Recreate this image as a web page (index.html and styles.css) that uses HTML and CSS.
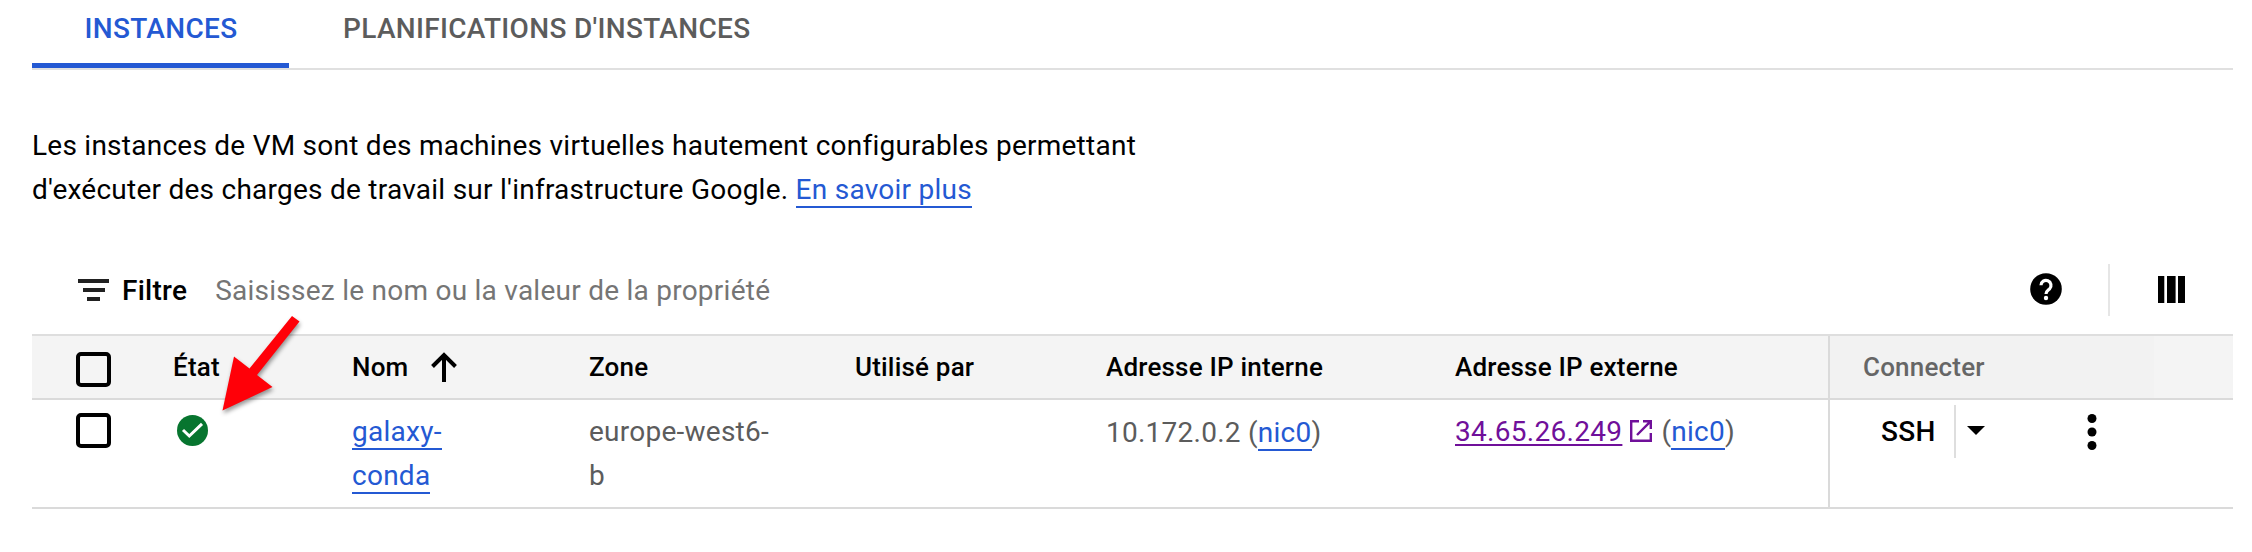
FILE: index.html
```html
<!DOCTYPE html>
<html lang="fr">
<head>
<meta charset="utf-8">
<title>Instances de VM</title>
<link rel="stylesheet" href="styles.css">
</head>
<body>
<main class="page">
  <nav class="tabs">
    <a class="tab tab-active">INSTANCES</a>
    <a class="tab">PLANIFICATIONS D'INSTANCES</a>
  </nav>
  <p class="intro">Les instances de VM sont des machines virtuelles hautement configurables permettant<br>d'exécuter des charges de travail sur l'infrastructure Google. <a class="link">En savoir plus</a></p>
  <div class="toolbar">
    <svg class="icon-filter" viewBox="0 0 31 22"><path d="M0 0h31v4H0zM5 9h22v4H5zM9 18h13v4H9z"/></svg>
    <span class="filter-label">Filtre</span>
    <span class="filter-hint">Saisissez le nom ou la valeur de la propriété</span>
    <svg class="icon-help" viewBox="0 0 32 32"><circle cx="16" cy="16" r="15.8"/><path class="q" d="M11 12.300a5 5 0 1 1 8.600 3.500C17.800 17.500 16 18.300 16 21"/><circle class="q-dot" cx="16" cy="25" r="2.200"/></svg>
    <span class="toolbar-rule"></span>
    <svg class="icon-columns" viewBox="0 0 27 27"><path d="M0 0h6.3v27H0zM9 0h8.6v27H9zM20 0h7v27h-7z"/></svg>
  </div>
  <div class="table">
    <div class="row head">
      <div class="cell"><span class="checkbox"></span></div>
      <div class="cell">État</div>
      <div class="cell">Nom<svg class="icon-sort" viewBox="0 0 26 30"><path d="M13 30V3M1.5 14.5 13 3l11.500 11.500"/></svg></div>
      <div class="cell">Zone</div>
      <div class="cell">Utilisé par</div>
      <div class="cell">Adresse IP interne</div>
      <div class="cell">Adresse IP externe</div>
      <div class="cell connect">Connecter</div>
    </div>
    <div class="row body">
      <div class="cell"><span class="checkbox"></span></div>
      <div class="cell"><svg class="icon-ok" viewBox="0 0 31 31"><circle cx="15.500" cy="15.500" r="15.500"/><path d="M6 15l6.300 6L25 8.800"/></svg></div>
      <div class="cell"><span><a class="link">galaxy-</a><br><a class="link">conda</a></span></div>
      <div class="cell">europe-west6-<br>b</div>
      <div class="cell"></div>
      <div class="cell ip-int"><span>10.172.0.2 (<a class="link">nic0</a>)</span></div>
      <div class="cell"><a class="visited">34.65.26.249</a><svg class="icon-open" viewBox="0 0 22 22"><path d="M9 1.200H1.200v19.600h19.600V13M13 1.200h7.800V9M20.800 1.200 7 15"/></svg><span>(<a class="link">nic0</a>)</span></div>
      <div class="cell connect"><span class="ssh">SSH</span><span class="ssh-rule"></span><svg class="icon-caret" viewBox="0 0 18 9"><path d="M0 0h18L9 9z"/></svg><svg class="icon-more" viewBox="0 0 10 36"><circle cx="5" cy="4.500" r="4.500"/><circle cx="5" cy="18" r="4.500"/><circle cx="5" cy="31.500" r="4.500"/></svg></div>
    </div>
  </div>
  <svg class="pointer" viewBox="0 0 90 105"><path d="M2.500 95.500 14 41.500l15.500 12L72 1l7.500 5.500L37 60l15.500 12z"/></svg>
</main>
</body>
</html>
```
FILE: styles.css
```css
* { box-sizing: border-box; }
body {
  margin: 0;
  background: #fff;
  color: #000;
  font: 400 28px/44px Roboto, sans-serif;
  letter-spacing: .25px;
}
svg { display: block; flex: none; }
.page { position: relative; width: 2252px; height: 552px; padding: 0 19px 0 32px; overflow: hidden; }
.tabs { display: flex; height: 70px; border-bottom: 2px solid #e0e0e0; }
.tab { height: 68px; padding: 7px 54px 0; font-weight: 500; color: #5c5c5c; white-space: nowrap; letter-spacing: .32px; }
.tab-active { width: 257px; padding: 7px 0 0 1px; text-align: center; color: #2459d3; border-bottom: 5px solid #2459d3; }
.intro { margin: 54px 0 0; white-space: nowrap; }
.link { color: #2459d3; border-bottom: 2px solid #2459d3; }
.visited { color: #70109a; letter-spacing: .3px; text-decoration: underline; text-decoration-thickness: 2px; text-underline-offset: 3px; }
.toolbar { display: flex; align-items: center; height: 88px; margin-top: 34px; padding: 0 48px 0 46px; white-space: nowrap; }
.icon-filter { width: 31px; height: 22px; fill: #212121; }
.filter-label { margin: 2px 0 0 13px; font-weight: 500; }
.filter-hint { margin: 2px 0 0 28px; color: #757575; }
.icon-help { width: 32px; height: 32px; margin: -2px 0 0 auto; }
.q { fill: none; stroke: #fff; stroke-width: 3.2; }
.q-dot { fill: #fff; }
.toolbar-rule { width: 2px; height: 52px; margin: 0 48px 0 46px; background: #e6e6e6; }
.icon-columns { width: 27px; height: 27px; margin-top: -1px; }
.table { border-top: 2px solid #dedede; }
.row { display: grid; grid-template-columns: 141px 179px 237px 266px 251px 349px 373px 405px; border-bottom: 2px solid #dadada; }
.cell { display: flex; white-space: nowrap; }
.head { height: 64px; background: #f4f4f4; font-size: 26px; font-weight: 500; letter-spacing: .19px; }
.head .cell { align-items: center; }
.checkbox { width: 35px; height: 35px; margin: 3px 0 0 44px; border: 4px solid #000; border-radius: 5px; background: #fff; }
.head .checkbox { margin-top: 4px; background: transparent; }
.cell.connect { border-left: 2px solid #dadada; }
.head .connect { padding-left: 33px; color: #666; background: linear-gradient(#f2f2f2, #f2f2f2) no-repeat 0 0 / 324px 100%; }
.icon-sort { width: 26px; height: 30px; margin-left: 23px; fill: none; stroke: #000; stroke-width: 4; }
.body { height: 109px; color: #5c5c5c; }
.body .cell { padding-top: 10px; }
.body .ip-int { padding-top: 11px; }
.icon-ok { width: 31px; height: 31px; margin: 5px 0 0 4px; fill: #07752f; }
.icon-ok path { fill: none; stroke: #fff; stroke-width: 3; }
.icon-open { width: 22px; height: 22px; margin: 10px 9px 0 8px; fill: none; stroke: #70109a; stroke-width: 2.400; }
.ssh { width: 73px; margin-left: 51px; color: #000; font-weight: 500; }
.ssh-rule { width: 2px; height: 53px; margin: -5px 11px 0 0; background: #dedede; }
.icon-caret { width: 18px; height: 9px; margin-top: 16px; }
.icon-more { width: 10px; height: 36px; margin: 4px 0 0 102px; }
/* annotation arrow lying over the table */
.pointer { position: absolute; left: 220px; top: 315px; width: 90px; height: 105px; fill: #ff0008; filter: drop-shadow(1px 3px 2px rgba(0, 0, 0, .4)); }
```
